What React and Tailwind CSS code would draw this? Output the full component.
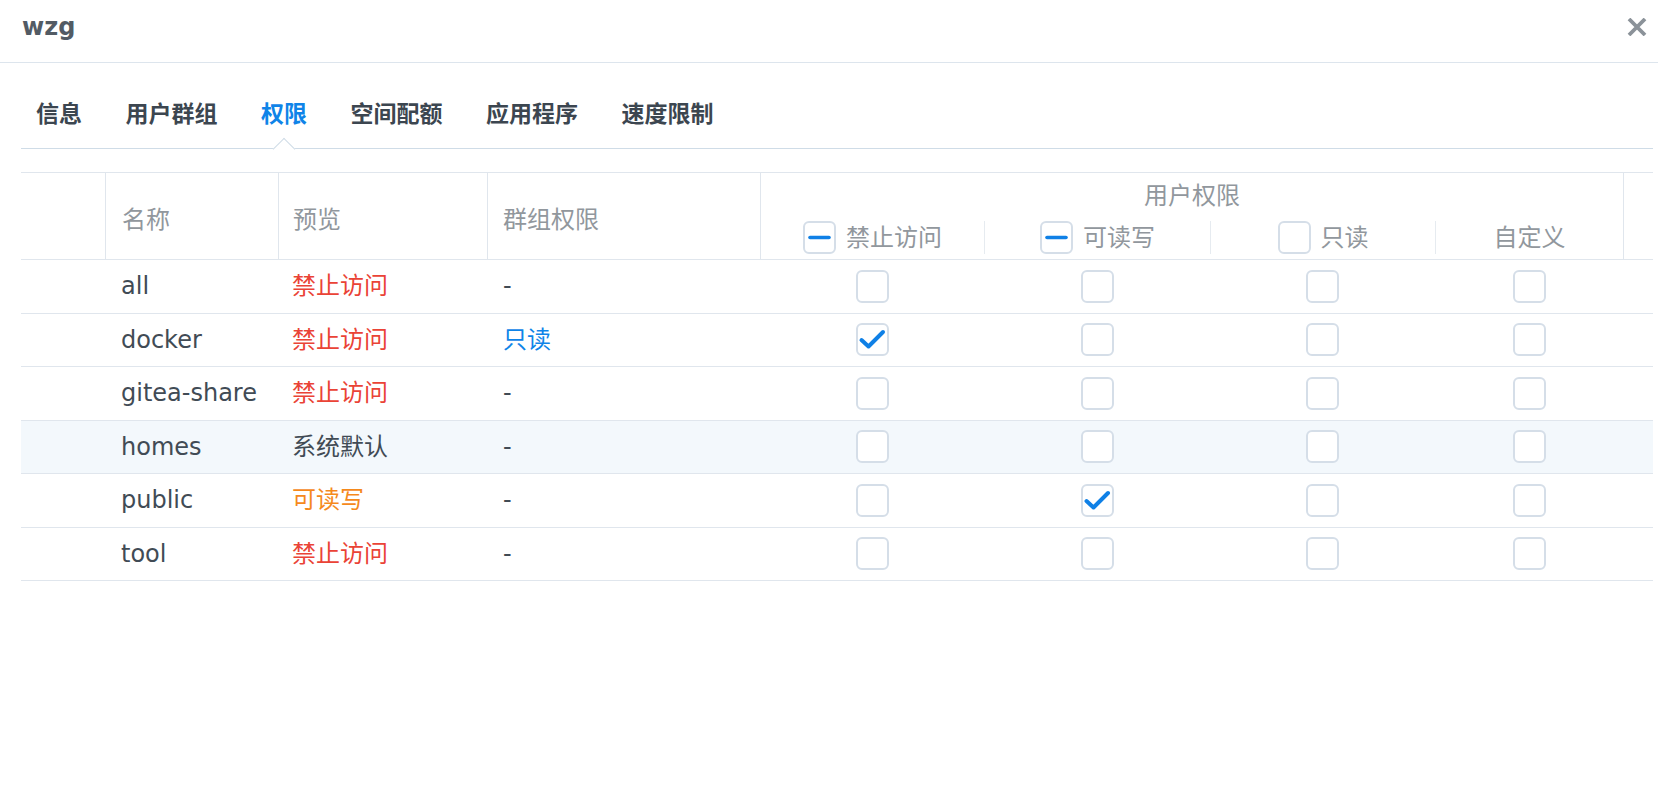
import React from "react";

const RED = "text-[#ea4336]";
const ORANGE = "text-[#f5891c]";
const BLUE = "text-[#0f84e8]";
const DARK = "text-[#414b55]";

const rows = [
  { name: "all", preview: "禁止访问", pc: RED, group: "-", gc: DARK, checks: [0, 0, 0, 0] },
  { name: "docker", preview: "禁止访问", pc: RED, group: "只读", gc: BLUE, checks: [1, 0, 0, 0] },
  { name: "gitea-share", preview: "禁止访问", pc: RED, group: "-", gc: DARK, checks: [0, 0, 0, 0] },
  { name: "homes", preview: "系统默认", pc: DARK, group: "-", gc: DARK, checks: [0, 0, 0, 0], hl: true },
  { name: "public", preview: "可读写", pc: ORANGE, group: "-", gc: DARK, checks: [0, 1, 0, 0] },
  { name: "tool", preview: "禁止访问", pc: RED, group: "-", gc: DARK, checks: [0, 0, 0, 0] },
];

function Box({ state }) {
  return (
    <div className="relative w-[33px] h-[33px] shrink-0 rounded-[6px] border-2 border-[#d5dee8] bg-white">
      {state === "check" && (
        <svg className="absolute inset-0" width="29" height="29" viewBox="0 0 29 29">
          <polyline
            points="3.5,15 10.5,21.5 25,7"
            fill="none"
            stroke="#0f80e6"
            strokeWidth="4"
            strokeLinecap="round"
            strokeLinejoin="round"
          />
        </svg>
      )}
      {state === "dash" && (
        <svg className="absolute inset-0" width="29" height="29" viewBox="0 0 29 29">
          <line x1="5" y1="14.5" x2="24" y2="14.5" stroke="#0f80e6" strokeWidth="3.6" strokeLinecap="round" />
        </svg>
      )}
    </div>
  );
}

const tabs = ["信息", "用户群组", "权限", "空间配额", "应用程序", "速度限制"];

export default function App() {
  return (
    <div className="w-[1658px] h-[802px] bg-white overflow-hidden font-['DejaVu_Sans','Noto_Sans_CJK_SC',sans-serif]">
      {/* Title bar */}
      <div className="h-[63px] border-b border-[#dde5ed] flex items-center justify-between pl-[22px] pr-[11px] pb-[9px]">
        <div className="text-[24px] font-bold text-[#525b64] leading-none">wzg</div>
        <svg width="20" height="18" viewBox="0 0 20 18">
          <path d="M2 1 L18 17 M18 1 L2 17" stroke="#8b9299" strokeWidth="3.8" strokeLinecap="butt" />
        </svg>
      </div>

      {/* Tabs */}
      <div className="ml-[21px] mr-[5px] h-[86px] border-b border-[#cfdce7] flex gap-[43.5px] pl-[15px] pt-[35px]">
        {tabs.map((t) => (
          <div
            key={t}
            className={
              t === "权限"
                ? "relative h-[32px] leading-[32px] text-[23px] font-bold text-[#0f84e8]"
                : "relative h-[32px] leading-[32px] text-[23px] font-bold text-[#3c4650]"
            }
          >
            {t}
            {t === "权限" && (
              <div className="absolute left-1/2 top-[43px] -ml-[8px] w-[16px] h-[16px] rotate-45 bg-white border-l border-t border-[#cfdce7]" />
            )}
          </div>
        ))}
      </div>

      {/* Table */}
      <div className="ml-[21px] mr-[5px] mt-[23px]">
        {/* Header */}
        <div className="grid grid-cols-[84px_173px_209px_273px_224px_226px_225px_188px_30px] h-[88px] border-t border-b border-[#e0e6ed] text-[24px] text-[#91979d]">
          <div />
          <div className="border-l border-[#e0e6ed] flex items-center pl-[16px] pt-[8px]">名称</div>
          <div className="border-l border-[#e0e6ed] flex items-center pl-[14px] pt-[8px]">预览</div>
          <div className="border-l border-[#e0e6ed] flex items-center pl-[15px] pt-[8px]">群组权限</div>
          <div className="col-span-4 border-l border-[#e0e6ed] flex flex-col">
            <div className="h-[32px] leading-[32px] mt-[7px] text-center">用户权限</div>
            <div className="mt-[9px] h-[30px] grid grid-cols-[223px_226px_225px_188px]">
              <div className="flex items-center justify-center gap-[10px]">
                <Box state="dash" />
                <span className="leading-[30px]">禁止访问</span>
              </div>
              <div className="border-l border-[#e6ebf0] flex items-center justify-center gap-[10px]">
                <Box state="dash" />
                <span className="leading-[30px]">可读写</span>
              </div>
              <div className="border-l border-[#e6ebf0] flex items-center justify-center gap-[10px]">
                <Box />
                <span className="leading-[30px]">只读</span>
              </div>
              <div className="border-l border-[#e6ebf0] flex items-center justify-center">
                <span className="leading-[30px]">自定义</span>
              </div>
            </div>
          </div>
          <div className="border-l border-[#e0e6ed]" />
        </div>

        {/* Body */}
        {rows.map((r) => (
          <div
            key={r.name}
            className={
              r.hl
                ? "grid grid-cols-[84px_173px_209px_273px_224px_226px_225px_188px_30px] h-[53.5px] border-b border-[#e0e6ed] bg-[#f3f8fc] text-[24px]"
                : "grid grid-cols-[84px_173px_209px_273px_224px_226px_225px_188px_30px] h-[53.5px] border-b border-[#e0e6ed] bg-white text-[24px]"
            }
          >
            <div />
            <div className={"flex items-center pl-[16px] " + DARK}>{r.name}</div>
            <div className={"flex items-center pl-[14px] " + r.pc}>{r.preview}</div>
            <div className={"flex items-center pl-[16px] " + r.gc}>{r.group}</div>
            {r.checks.map((c, i) => (
              <div key={i} className="flex items-center justify-center">
                <Box state={c ? "check" : undefined} />
              </div>
            ))}
            <div />
          </div>
        ))}
      </div>
    </div>
  );
}
